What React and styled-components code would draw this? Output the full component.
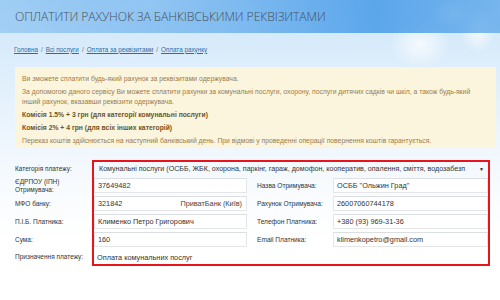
import React from 'react';
import styled, { createGlobalStyle } from 'styled-components';

const Global = createGlobalStyle`
  html, body {
    margin: 0;
    padding: 0;
  }
  body {
    width: 500px;
    height: 300px;
    overflow: hidden;
    background: #fff;
    font-family: "Liberation Sans", Arial, sans-serif;
  }
`;

const Page = styled.div`
  width: 500px;
  height: 300px;
  background:
    radial-gradient(ellipse 22px 14px at 452px 14px, rgba(255,255,255,0.85), rgba(255,255,255,0) 100%),
    radial-gradient(ellipse 18px 22px at 478px 30px, rgba(255,255,255,0.8), rgba(255,255,255,0) 100%),
    radial-gradient(ellipse 30px 26px at 420px 44px, rgba(255,255,255,0.75), rgba(255,255,255,0) 100%),
    radial-gradient(ellipse 60px 20px at 150px 4px, rgba(255,255,255,0.45), rgba(255,255,255,0) 100%),
    linear-gradient(to bottom, #cfe6f9 0px, #dcedfb 60px, #eef6fd 140px, #fafcfe 200px, #ffffff 240px);
`;

const Header = styled.header`
  height: 33px;
  display: flex;
  align-items: center;
  padding-left: 15px;
  background: linear-gradient(to right, rgba(120,185,240,0.55) 0%, rgba(95,170,236,0.7) 45%, rgba(70,155,232,0.85) 75%, rgba(80,160,232,0.7) 100%);
`;

const Title = styled.h1`
  margin: 0;
  font-family: "Open Sans", "DejaVu Sans", sans-serif;
  font-weight: 300;
  font-size: 12.2px;
  letter-spacing: -0.1px;
  color: #46525e;
  text-transform: uppercase;
  white-space: nowrap;
`;

const Main = styled.main`
  padding: 0 4px 0 15px;
`;

const Crumbs = styled.nav`
  display: flex;
  align-items: center;
  gap: 3px;
  height: 12px;
  margin: 10px 0 0 -1px;
  font-size: 6.3px;
  color: #5a6a78;
`;

const Crumb = styled.a`
  color: #2c6ca6;
  text-decoration: underline;
`;

const Notice = styled.div`
  margin-top: 12px;
  width: 481px;
  height: 81px;
  box-sizing: border-box;
  padding: 7px 7px;
  background: #fcf5de;
  font-size: 6.8px;
`;

const Para = styled.p`
  margin: 0 0 3px;
  line-height: 10px;
  font-weight: ${(p) => (p.$bold ? 'bold' : 'normal')};
  color: ${(p) => (p.$bold ? '#6e5426' : '#9a7c4c')};
`;

const Form = styled.div`
  display: flex;
  margin-top: 12px;
`;

const Labels = styled.div`
  width: 77px;
  padding-top: 2px;
  display: flex;
  flex-direction: column;
  gap: 3px;
`;

const Label = styled.div`
  height: ${(p) => p.$h || 15}px;
  display: flex;
  align-items: center;
  font-size: 6.5px;
  line-height: 8px;
  color: #333;
`;

const Panel = styled.div`
  width: 394px;
  border: 2px solid #e8141c;
  display: flex;
  flex-direction: column;
  gap: 3px;
`;

const Select = styled.div`
  height: 13px;
  margin: 0 1px 0 2px;
  display: flex;
  align-items: center;
  padding: 0 3px;
  font-size: 7.1px;
  color: #333;
  white-space: nowrap;
  overflow: hidden;
`;

const SelectText = styled.span`
  flex: 1;
  overflow: hidden;
`;

const Arrow = styled.span`
  flex-shrink: 0;
  font-size: 5px;
  color: #222;
  margin-left: 6px;
`;

const Row = styled.div`
  display: grid;
  grid-template-columns: 153px 10px 76px 155px;
  align-items: center;
  height: ${(p) => p.$h || 15}px;
`;

const Field = styled.div`
  grid-column: ${(p) => p.$col};
  height: 15px;
  box-sizing: border-box;
  border: 1px solid #e4e6e8;
  border-top-color: #dcdfe2;
  background: #fff;
  display: flex;
  align-items: center;
  justify-content: space-between;
  padding: 0 4px 0 3px;
  font-size: 7.3px;
  color: #333;
  white-space: nowrap;
`;

const Plain = styled.div`
  grid-column: 1 / -1;
  padding-left: 3px;
  font-size: 7.3px;
  color: #333;
`;

const SideLabel = styled.div`
  grid-column: 3;
  font-size: 6.6px;
  color: #333;
  white-space: nowrap;
`;

const Bank = styled.span`
  color: #444;
`;

export default function App() {
  return (
    <Page>
      <Global />
      <Header>
        <Title>Оплатити рахунок за банківськими реквізитами</Title>
      </Header>
      <Main>
        <Crumbs>
          <Crumb>Головна</Crumb>/<Crumb>Всі послуги</Crumb>/<Crumb>Оплата за реквізитами</Crumb>/<Crumb>Оплата рахунку</Crumb>
        </Crumbs>
        <Notice>
          <Para>Ви зможете сплатити будь-який рахунок за реквізитами одержувача.</Para>
          <Para>
            За допомогою даного сервісу Ви можете сплатити рахунки за комунальні послуги, охорону, послуги дитячих садків чи шкіл, а також будь-який інший рахунок, вказавши реквізити одержувача.
          </Para>
          <Para $bold>Комісія 1.5% + 3 грн (для категорії комунальні послуги)</Para>
          <Para $bold>Комісія 2% + 4 грн (для всіх інших категорій)</Para>
          <Para>Переказ коштів здійснюється на наступний банківський день. При відмові у проведенні операції повернення коштів гарантується.</Para>
        </Notice>
        <Form>
          <Labels>
            <Label $h={13}>Категорія платежу:</Label>
            <Label>ЄДРПОУ (ІПН)<br />Отримувача:</Label>
            <Label>МФО банку:</Label>
            <Label>П.І.Б. Платника:</Label>
            <Label>Сума:</Label>
            <Label $h={14}>Призначення платежу:</Label>
          </Labels>
          <Panel>
            <Select>
              <SelectText>Комунальні послуги (ОСББ, ЖБК, охорона, паркінг, гараж, домофон, кооператив, опалення, сміття, водозабезп</SelectText>
              <Arrow>▼</Arrow>
            </Select>
            <Row>
              <Field $col={1}>37649482</Field>
              <SideLabel>Назва Отримувача:</SideLabel>
              <Field $col={4}>ОСББ "Ольжин Град"</Field>
            </Row>
            <Row>
              <Field $col={1}>321842<Bank>ПриватБанк (Київ)</Bank></Field>
              <SideLabel>Рахунок Отримувача:</SideLabel>
              <Field $col={4}>26007060744178</Field>
            </Row>
            <Row>
              <Field $col={1}>Клименко Петро Григорович</Field>
              <SideLabel>Телефон Платника:</SideLabel>
              <Field $col={4}>+380 (93) 969-31-36</Field>
            </Row>
            <Row>
              <Field $col={1}>160</Field>
              <SideLabel>Email Платника:</SideLabel>
              <Field $col={4}>klimenkopetro@gmail.com</Field>
            </Row>
            <Row $h={14}>
              <Plain>Оплата комунальних послуг</Plain>
            </Row>
          </Panel>
        </Form>
      </Main>
    </Page>
  );
}
